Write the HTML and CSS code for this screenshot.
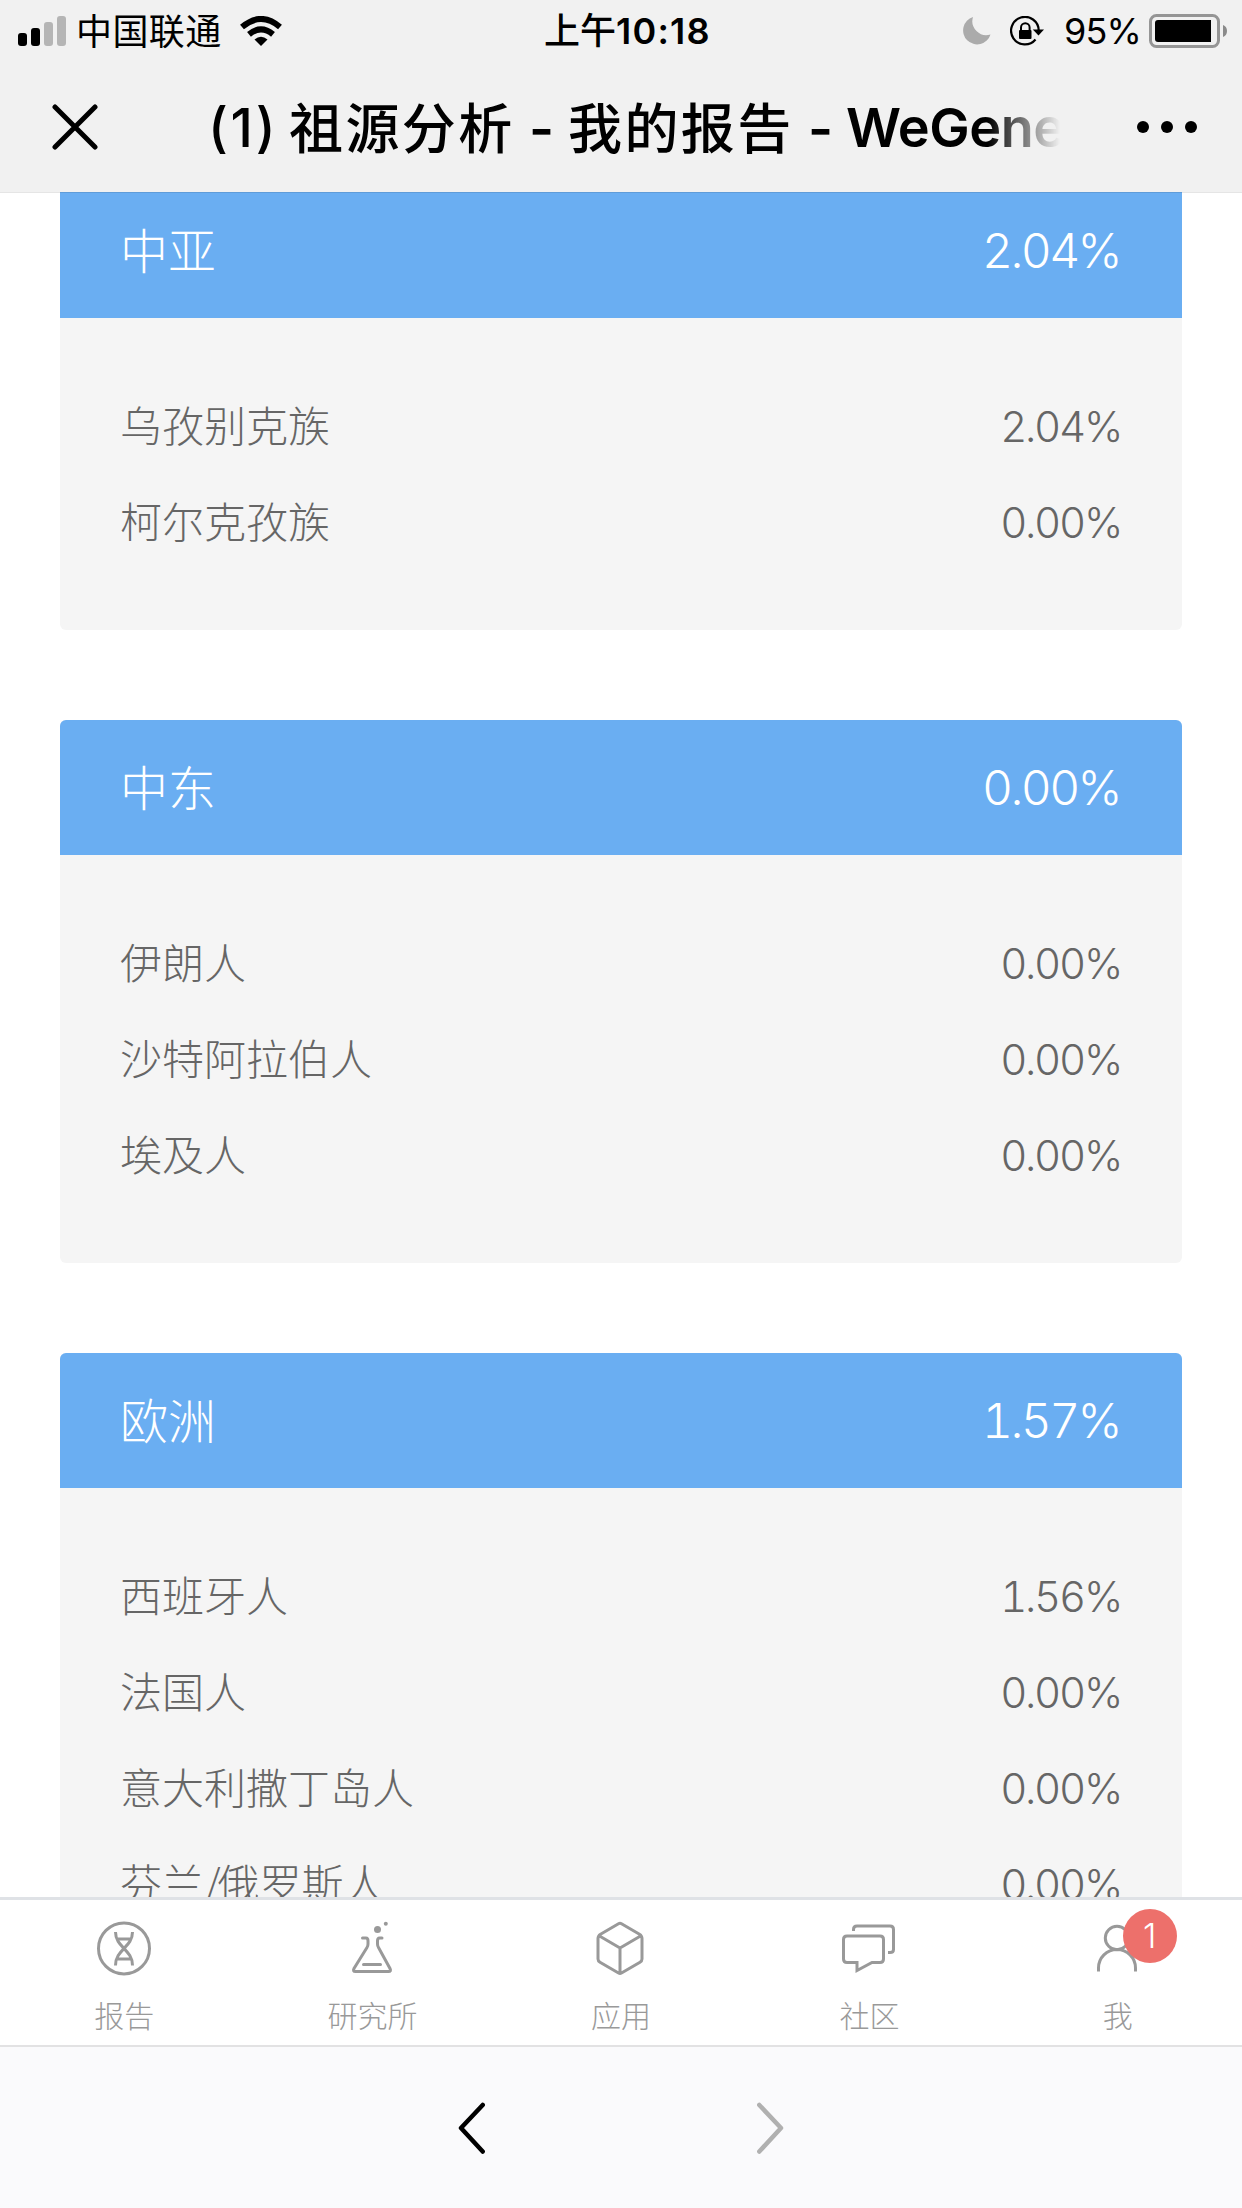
FILE: index.html
```html
<!DOCTYPE html>
<html lang="zh-CN">
<head>
<meta charset="utf-8">
<title>祖源分析 - 我的报告</title>
<link rel="stylesheet" href="styles.css">
</head>
<body>
<div class="screen">
  <header class="top">
    <div class="status">
      <div class="status-left">
        <svg class="signal" width="48" height="30" viewBox="0 0 48 30"><rect y="17" width="9" height="13" rx="3"/><rect x="13" y="12" width="9" height="18" rx="3"/><rect x="26" y="6" width="9" height="24" rx="3" fill="#b5b5b5"/><rect x="39" width="9" height="30" rx="3" fill="#b5b5b5"/></svg>
        <span class="carrier">中国联通</span>
        <svg class="wifi" width="42" height="30" viewBox="0 0 42 30"><g fill="none" stroke="#000" stroke-width="6"><path d="M2 11Q21-5 40 11"/><path d="M9 18.4Q21 8.4 33 18.4"/></g><path d="M14.5 23.5Q21 18 27.5 23.5L21 30Z"/></svg>
      </div>
      <div class="time">上午<span class="digits">10:18</span></div>
      <div class="status-right">
        <svg class="moon" width="28" height="28" viewBox="0 0 28 28"><path fill="#ababab" d="M10 0A14 14 0 1 0 27.500 17.500A14 14 0 0 1 10 0Z"/></svg>
        <svg class="lock" width="34" height="30" viewBox="0 0 34 30"><g fill="none" stroke="#000" stroke-width="2.200"><path d="M25.500 23.500A13.800 13.800 0 1 1 28.700 14.500"/><path d="M11 15V11.500a4.300 4.300 0 0 1 8.600 0V15" stroke-width="2"/></g><path d="M22.800 13.500H34L28.500 19.500Z"/><rect x="9" y="14" width="12.500" height="9" rx="1"/></svg>
        <span class="percent">95%</span>
        <svg class="battery" width="78" height="34" viewBox="0 0 78 34"><rect x="1.500" y="1.500" width="68" height="31" rx="6" fill="none" stroke="#959595" stroke-width="3"/><path d="M9 6H62V28H9Q6 28 6 25V9Q6 6 9 6Z"/><path fill="#8b8b8b" d="M74 11Q78 12.500 78 17T74 23Z"/></svg>
      </div>
    </div>
    <div class="nav">
      <svg class="close" width="46" height="46" viewBox="0 0 46 46"><path d="M3 3L43 43M43 3L3 43" fill="none" stroke="#000" stroke-width="5" stroke-linecap="round"/></svg>
      <h1 class="title"><span class="num">(1)</span><span class="cjk">祖源分析</span><span class="dash">-</span><span class="cjk">我的报告</span><span class="dash">-</span><span class="brand">WeGene</span></h1>
      <svg class="more" width="60" height="12" viewBox="0 0 60 12"><circle cx="6" cy="6" r="6"/><circle cx="30" cy="6" r="6"/><circle cx="54" cy="6" r="6"/></svg>
    </div>
  </header>

  <main class="content">
    <section class="card">
      <h2 class="card-head"><span class="name">中亚</span><span class="value">2.04%</span></h2>
      <ul class="rows">
        <li><span class="name">乌孜别克族</span><span class="value">2.04%</span></li>
        <li><span class="name">柯尔克孜族</span><span class="value">0.00%</span></li>
      </ul>
    </section>
    <section class="card">
      <h2 class="card-head"><span class="name">中东</span><span class="value">0.00%</span></h2>
      <ul class="rows">
        <li><span class="name">伊朗人</span><span class="value">0.00%</span></li>
        <li><span class="name">沙特阿拉伯人</span><span class="value">0.00%</span></li>
        <li><span class="name">埃及人</span><span class="value">0.00%</span></li>
      </ul>
    </section>
    <section class="card">
      <h2 class="card-head"><span class="name">欧洲</span><span class="value">1.57%</span></h2>
      <ul class="rows">
        <li><span class="name">西班牙人</span><span class="value">1.56%</span></li>
        <li><span class="name">法国人</span><span class="value">0.00%</span></li>
        <li><span class="name">意大利撒丁岛人</span><span class="value">0.00%</span></li>
        <li><span class="name">芬兰<span class="slash">/</span>俄罗斯人</span><span class="value">0.00%</span></li>
      </ul>
    </section>
  </main>

  <nav class="tabs">
    <a class="tab"><svg class="icon" viewBox="0 -.4 60 60"><circle cx="30" cy="30" r="25.500"/><path d="M21.500 13.500C21.500 29 38.500 31 38.500 47M38.500 13.500C38.500 29 21.500 31 21.500 47M23 20.500H37M23 40.500H37"/></svg><span>报告</span></a>
    <a class="tab"><svg class="icon" viewBox="1 0 60 60"><path stroke-linecap="round" d="M20.500 20H24Q26 20 26 23V26Q26 28 25 29.500L12 50.500Q10.500 53.500 13.500 53.500H46.500Q49.500 53.500 48 50.500L36.500 29.500Q35.500 28 35.500 26V23Q35.500 20 37.500 20H40M21.500 46.500H38.500"/><circle class="solid" cx="35.500" cy="11.500" r="3.500"/><circle class="solid" cx="43.800" cy="5.700" r="2"/></svg><span>研究所</span></a>
    <a class="tab"><svg class="icon" viewBox="1 -.5 60 60"><path stroke-linejoin="round" d="M28.500 5.200Q30 4.300 31.500 5.200L49.500 15.700Q52 17.300 52 20V40.500Q52 42.500 50 43.700L31.500 54.500Q30 55.300 28.500 54.500L10 43.700Q8 42.500 8 40.500V20Q8 17.300 10.500 15.700ZM9.500 17.500L30 29.500L50.500 17.500M30 29.500V54"/></svg><span>应用</span></a>
    <a class="tab"><svg class="icon" viewBox="1 -1 60 60"><path d="M9 17H42Q45.500 17 45.500 20.500V40Q45.500 43.500 42 43.500H34L19 51.500V43.500H9Q5.500 43.500 5.500 40V20.500Q5.500 17 9 17ZM15.500 12V10.500Q15.500 7 19 7H52Q55.500 7 55.500 10.500V30.500Q55.500 33.500 52 33.500H50"/></svg><span>社区</span></a>
    <a class="tab"><svg class="icon" viewBox="0 0 60 60"><circle cx="29" cy="20" r="11.700"/><path d="M10.500 53.500V50A18.500 18.500 0 0 1 47.500 50V53.500"/></svg><span>我</span><b class="badge">1</b></a>
  </nav>

  <footer class="pager">
    <svg width="28" height="54" viewBox="0 0 28 54"><path d="M24.700 4L3 27L24.700 50.500" stroke="#000"/></svg>
    <svg width="28" height="54" viewBox="0 0 28 54"><path d="M3.300 4L25 27L3.300 50.500" stroke="#b0b0b0"/></svg>
  </footer>
</div>
</body>
</html>
```
FILE: styles.css
```css
* { box-sizing: border-box; margin: 0; padding: 0; }

body {
  width: 1242px;
  height: 2208px;
  overflow: hidden;
  background: #fff;
  font-family: "Noto Sans CJK SC", sans-serif;
}

svg { display: block; flex: none; }

.screen { display: flex; flex-direction: column; height: 2208px; }

/* status bar and title */
.top {
  position: relative;
  z-index: 1;
  flex: none;
  height: 192px;
  background: #f1f1f1;
  box-shadow: 0 1px rgba(0, 0, 0, 0.1);
  color: #000;
}

.status {
  display: grid;
  grid-template-columns: 544px 1fr 279px;
  align-items: center;
  height: 61px;
  font-size: 36px;
  line-height: 52px;
  white-space: nowrap;
}

.status-left, .status-right { display: flex; align-items: center; height: 61px; }
.status-left { padding-left: 18px; }
.carrier { width: 150px; margin-left: 10px; padding-bottom: 4px; letter-spacing: 0.4px; }
.wifi { margin-left: 14px; }
.time { padding-bottom: 3px; font-weight: 500; }
.digits { font-family: Inter, sans-serif; font-weight: 600; letter-spacing: 1.2px; }
.moon { margin-right: 19px; }
.percent { width: 83px; margin-left: 20px; margin-right: 2px; padding-bottom: 0; font-family: Inter, sans-serif; letter-spacing: -0.9px; }

.nav {
  display: flex;
  align-items: center;
  height: 131px;
  padding: 0 45px 0 52px;
}

.title {
  display: flex;
  align-items: center;
  width: 854px;
  margin-left: 110px;
  overflow: hidden;
  font-size: 54px;
  font-weight: 500;
  line-height: 80px;
  white-space: nowrap;
  -webkit-mask-image: linear-gradient(90deg, #000 780px, transparent 852px);
  mask-image: linear-gradient(90deg, #000 780px, transparent 852px);
}

.title span { flex: none; }
.num, .dash, .brand { font-family: Inter, sans-serif; font-weight: 600; }
.num { width: 81px; padding-top: 2px; font-weight: 500; letter-spacing: 2.5px; }
.cjk { width: 239px; padding-bottom: 2px; letter-spacing: 2.4px; }
.dash { width: 40px; padding: 4px 0 0 1px; }
.brand { padding-top: 2px; margin-left: -1px; letter-spacing: -0.5px; }
.more { margin-left: 75px; }

/* ancestry cards */
.content {
  display: flex;
  flex: 1;
  flex-direction: column;
  gap: 90px;
  min-height: 0;
  margin-top: -9px;
  padding: 0 60px;
  overflow: hidden;
}

.card { flex: none; border-radius: 6px; overflow: hidden; background: #f5f5f5; }

.card-head, .rows li { display: flex; align-items: center; justify-content: space-between; }

.card-head {
  height: 135px;
  padding: 0 60px;
  background: #6aaef2;
  color: #fff;
  font-size: 48px;
  font-weight: 300;
}

.rows { padding: 60px; list-style: none; }
.rows li { height: 96px; color: #666; font-size: 42px; font-weight: 300; }
.name { padding-bottom: 6px; }
.slash { letter-spacing: -3px; }
.value {
  margin-right: 2px;
  font-family: Inter, sans-serif;
  font-weight: 300;
  font-variant-numeric: tabular-nums;
  letter-spacing: -0.054em;
}

.rows .value { margin-right: 1px; }

/* site tab bar */
.tabs {
  display: grid;
  flex: none;
  grid-template-columns: repeat(5, 1fr);
  height: 150px;
  border-top: 3px solid #dfe2e6;
  border-bottom: 2px solid #e2e2e3;
  background: #fff;
}

.tab {
  position: relative;
  display: flex;
  flex-direction: column;
  align-items: center;
  padding-top: 18px;
  color: #999;
  font-size: 30px;
  font-weight: 300;
  line-height: 44px;
}

.icon { width: 60px; height: 60px; margin-bottom: 14px; fill: none; stroke: #999; stroke-width: 3; }
.icon .solid { fill: #999; stroke: none; }

.badge {
  position: absolute;
  top: 9px;
  left: 129px;
  width: 54px;
  height: 54px;
  border-radius: 50%;
  background: #ed706b;
  color: #fff;
  font: 300 34px/54px Inter, sans-serif;
  text-align: center;
}

/* browser history controls */
.pager {
  display: flex;
  flex: none;
  align-items: center;
  justify-content: center;
  gap: 270px;
  height: 161px;
  background: #fafafc;
}

.pager path { fill: none; stroke-width: 4.5; stroke-linecap: round; stroke-linejoin: round; }
```
